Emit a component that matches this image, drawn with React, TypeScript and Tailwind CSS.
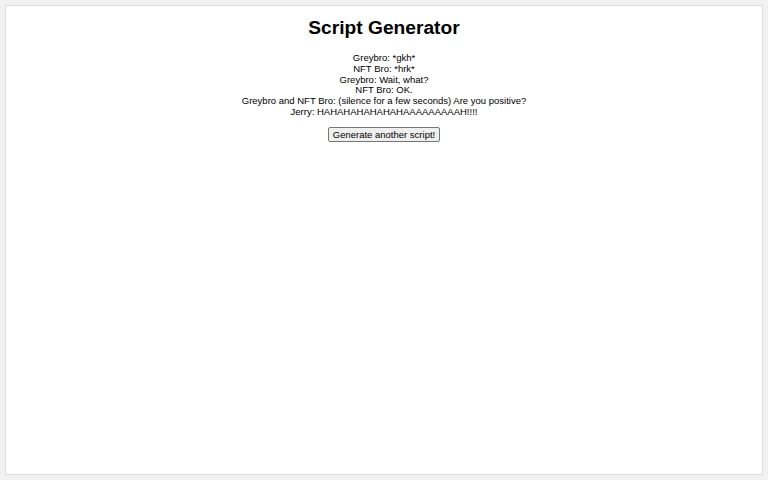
const lines = [
  "Greybro: *gkh*",
  "NFT Bro: *hrk*",
  "Greybro: Wait, what?",
  "NFT Bro: OK.",
  "Greybro and NFT Bro: (silence for a few seconds) Are you positive?",
  "Jerry: HAHAHAHAHAHAHAAAAAAAAAH!!!!",
];

export default function App() {
  return (
    <div className="h-[480px] w-[768px] bg-[#f2f2f2] p-[5px] font-['Liberation_Sans',Arial,sans-serif] text-black">
      <div className="flex h-full flex-col items-center border border-[#dcdcdc] bg-white">
        <h1 className="mt-[10px] text-[19.2px] font-bold leading-[24px]">Script Generator</h1>
        <div className="mt-[13px] flex flex-col items-center text-[9.5px] leading-[10.8px]">
          {lines.map((l, i) => (
            <p key={i}>{l}</p>
          ))}
        </div>
        <button className="mt-[9px] rounded-[2px] border border-[#767676] bg-[#efefef] px-[4px] text-[9.5px] leading-[13px]">
          Generate another script!
        </button>
      </div>
    </div>
  );
}
